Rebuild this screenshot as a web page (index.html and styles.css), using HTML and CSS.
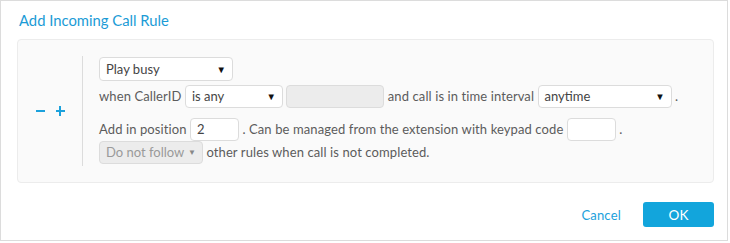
FILE: index.html
```html
<!DOCTYPE html>
<html>
<head>
<meta charset="utf-8">
<link rel="stylesheet" href="styles.css">
</head>
<body>
<div class="dialog">
  <div class="title">Add Incoming Call Rule</div>
  <div class="panel">
    <div class="actions">
      <span class="act minus"></span>
      <span class="act plus"></span>
    </div>
    <div class="rule">
      <div class="row r1">
        <span class="sel w134"><span>Play busy</span><span class="arr">▼</span></span>
      </div>
      <div class="row r2">
        when CallerID <span class="sel w98"><span>is any</span><span class="arr">▼</span></span> <span class="inp w98 dis"></span> and call is in time interval <span class="sel w134"><span>anytime</span><span class="arr">▼</span></span> .
      </div>
      <div class="row r3">
        Add in position <span class="inp w49">2</span> . Can be managed from the extension with keypad code <span class="inp w49"></span> .
      </div>
      <div class="row r4">
        <span class="sel w104 dis"><span>Do not follow</span><span class="arr">▼</span></span> other rules when call is not completed.
      </div>
    </div>
  </div>
  <div class="footer">
    <span class="cancel">Cancel</span>
    <span class="ok">OK</span>
  </div>
</div>
</body>
</html>
```
FILE: styles.css
```css
html, body { margin: 0; padding: 0; background: #fff; }
body { font-family: "Lato", "Open Sans", sans-serif; color: #5c5c5c; font-size: 13px; }
.dialog {
  box-sizing: border-box;
  width: 728px;
  height: 241px;
  border: 1px solid #dcdcdc;
  background: #fff;
}
.title {
  color: #1b9bd6;
  font-size: 14.8px;
  line-height: 18px;
  padding: 10px 0 0 18px;
  height: 28px;
  box-sizing: border-box;
}
.panel {
  box-sizing: border-box;
  margin: 10px 13px 0 16px;
  width: 697px;
  height: 144px;
  border: 1px solid #ececec;
  border-radius: 4px;
  background: #fafafa;
  display: flex;
  align-items: flex-start;
  padding-top: 16px;
}
.actions {
  width: 64px;
  height: 110px;
  display: flex;
  align-items: center;
  justify-content: center;
  gap: 11px;
}
.act { position: relative; display: inline-block; width: 9px; height: 9px; }
.act::before { content: ""; position: absolute; left: 0; top: 3px; width: 9px; height: 2.5px; background: #1ba1dc; }
.plus::after { content: ""; position: absolute; left: 3.25px; top: -0.5px; width: 2.5px; height: 10px; background: #1ba1dc; }
.rule {
  border-left: 1px solid #dcdcdc;
  height: 110px;
  box-sizing: border-box;
  padding: 1px 0 0 16px;
  letter-spacing: 0.1px;
}
.row { white-space: nowrap; line-height: 23px; height: 23px; }
.r1 { height: 24px; }
.r2 { margin-top: 4px; }
.r3 { margin-top: 10px; }
.sel, .inp {
  display: inline-flex;
  align-items: center;
  box-sizing: border-box;
  height: 23px;
  border: 1px solid #dcdcdc;
  border-radius: 4px;
  background: #fff;
  vertical-align: top;
  padding: 0 6px;
  color: #444;
  letter-spacing: 0;
}
.r1 .sel { height: 24px; }
.sel { justify-content: space-between; }
.arr { font-size: 9.5px; color: #111; }
.dis { background: #ececec; color: #9a9a9a; }
.dis .arr { color: #888; font-size: 8px; }
.w134 { width: 134px; }
.w98 { width: 98px; }
.w104 { width: 104px; }
.w49 { width: 49px; }
.footer {
  display: flex;
  justify-content: flex-end;
  align-items: center;
  margin: 19px 13px 0 0;
}
.cancel { color: #1ba1dc; margin-right: 22px; letter-spacing: 0.2px; }
.ok {
  display: inline-flex;
  align-items: center;
  justify-content: center;
  width: 71px;
  height: 25px;
  background: #12a5dc;
  color: #fff;
  border-radius: 3px;
  font-size: 13.5px;
}
```
